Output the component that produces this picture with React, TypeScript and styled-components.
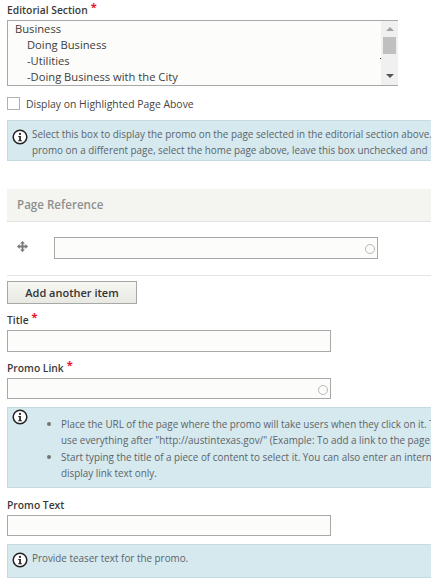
import { createGlobalStyle } from "styled-components";
import styled from "styled-components";

const GlobalStyle = createGlobalStyle`
  html, body {
    margin: 0;
    padding: 0;
    background: #fff;
    overflow: hidden;
    height: 585px;
  }
  body {
    font-family: "Open Sans", "Liberation Sans", sans-serif;
    color: #333;
  }
`;

const Page = styled.div`
  width: 431px;
  height: 585px;
  overflow: hidden;
  padding: 0 0 0 7px;
  box-sizing: border-box;
`;

const Label = styled.div<{ $top: number }>`
  margin-top: ${(p) => p.$top}px;
  height: 14px;
  line-height: 14px;
  font-size: 10.3px;
  font-weight: 600;
  color: #3a3a3a;
  white-space: nowrap;
`;

const Star = styled.span`
  color: #e8132b;
  font-size: 11px;
  font-weight: 700;
  margin-left: 3px;
  position: relative;
  top: -3px;
`;

const ListBox = styled.div`
  margin-top: 3px;
  width: 391px;
  height: 66px;
  box-sizing: border-box;
  border: 1px solid #a8a8a8;
  border-width: 1px 0 1px 1px;
  background: #fcfcfa;
  display: flex;
`;

const ListItems = styled.div`
  flex: 1;
  overflow: hidden;
`;

const ListItem = styled.div<{ $indent: number }>`
  height: 16px;
  line-height: 16px;
  font-size: 11.2px;
  color: #3d3d3d;
  padding-left: ${(p) => p.$indent}px;
  white-space: nowrap;
`;

const Scrollbar = styled.div`
  width: 17px;
  background: #f0f0f0;
  position: relative;
  display: flex;
  flex-direction: column;
  align-items: center;
  justify-content: space-between;
  padding: 6px 0 7px;
  box-sizing: border-box;

  &::before {
    content: "";
    position: absolute;
    left: -1px;
    top: 37px;
    width: 1px;
    height: 1px;
    background: #444;
  }
`;

const ScrollThumb = styled.div`
  position: absolute;
  top: 16px;
  left: 2px;
  width: 13px;
  height: 17px;
  background: #c0c0c0;
`;

const Arrow = styled.div<{ $down?: boolean }>`
  width: 0;
  height: 0;
  border-left: 4px solid transparent;
  border-right: 4px solid transparent;
  ${(p) =>
    p.$down
      ? "border-top: 4px solid #555;"
      : "border-bottom: 4px solid #a3a3a3;"}
`;

const CheckRow = styled.div`
  margin-top: 10px;
  display: flex;
  align-items: center;
  height: 14px;
`;

const CheckBox = styled.div`
  width: 13px;
  height: 13px;
  box-sizing: border-box;
  border: 1px solid #b0b0b0;
  background: #fff;
`;

const CheckLabel = styled.span`
  margin: 2px 0 0 6px;
  font-size: 10.4px;
  color: #444;
  white-space: nowrap;
`;

const Notice = styled.div<{ $top: number; $height: number }>`
  margin-top: ${(p) => p.$top}px;
  width: 460px;
  height: ${(p) => p.$height}px;
  box-sizing: border-box;
  background: #d5e9ef;
  border: 1px solid #c5dbe1;
  display: flex;
  font-size: 9.87px;
  line-height: 16px;
  color: #5d6468;
`;

const NoticeIcon = styled.svg<{ $top: number }>`
  flex: none;
  width: 16px;
  height: 16px;
  margin: ${(p) => p.$top}px 0 0 4px;
`;

const NoticeText = styled.div`
  margin: 5px 0 0 4px;
  white-space: nowrap;
`;

const NoticeList = styled.ul`
  margin: 8px 0 0 33px;
  padding: 0;
  list-style: none;
`;

const NoticeItem = styled.li`
  position: relative;
  white-space: nowrap;

  & + & {
    margin-top: 1px;
  }

  &::before {
    content: "";
    position: absolute;
    left: -14px;
    top: 6px;
    width: 4px;
    height: 4px;
    border-radius: 50%;
    background: #6f7678;
  }
`;

const SectionHead = styled.div`
  margin-top: 28px;
  height: 33px;
  box-sizing: border-box;
  background: #f4f4f0;
  border-bottom: 1px solid #e2e2e0;
  padding-left: 10px;
  line-height: 32px;
  font-size: 11.6px;
  font-weight: 600;
  color: #8f8f8f;
`;

const RefRow = styled.div`
  height: 54px;
  box-sizing: border-box;
  border-bottom: 1px solid #e4e4e4;
  display: flex;
  align-items: flex-start;
  padding: 15px 0 0 10px;
`;

const DragIcon = styled.svg`
  width: 11px;
  height: 11px;
  margin-top: 4px;
  flex: none;
`;

const TextField = styled.div<{ $top?: number; $left?: number; $height?: number }>`
  margin-top: ${(p) => p.$top ?? 0}px;
  margin-left: ${(p) => p.$left ?? 0}px;
  width: 324px;
  height: ${(p) => p.$height ?? 22}px;
  flex: none;
  box-sizing: border-box;
  border: 1px solid #a8a8a8;
  background: #fcfcfa;
  position: relative;
`;

const Throbber = styled.span`
  position: absolute;
  right: 2px;
  top: 6px;
  width: 10px;
  height: 10px;
  box-sizing: border-box;
  border: 1.5px solid #b8b8b8;
  border-radius: 50%;
`;

const AddButton = styled.button`
  display: block;
  margin: 5px 0 0;
  padding: 0;
  width: 130px;
  height: 23px;
  box-sizing: border-box;
  border: 1px solid #a8a8a8;
  border-radius: 0;
  background: linear-gradient(#f7f7f3, #e9e9e3);
  font-family: inherit;
  font-size: 11px;
  font-weight: 600;
  color: #333;
`;

function InfoGlyph({ top }: { top: number }) {
  return (
    <NoticeIcon $top={top} viewBox="0 0 16 16">
      <circle cx="8" cy="8" r="6.8" fill="#fff" stroke="#222" strokeWidth="1.5" />
      <circle cx="8" cy="4.9" r="1.1" fill="#222" />
      <path d="M6.3 7h2.6v4.2h1v1.1H6.2v-1.1h1V8.1h-.9z" fill="#222" />
    </NoticeIcon>
  );
}

export default function App() {
  return (
    <>
      <GlobalStyle />
      <Page>
        <Label $top={3}>
          Editorial Section<Star>*</Star>
        </Label>
        <ListBox>
          <ListItems>
            <ListItem $indent={7}>Business</ListItem>
            <ListItem $indent={19}>Doing Business</ListItem>
            <ListItem $indent={19}>-Utilities</ListItem>
            <ListItem $indent={19}>-Doing Business with the City</ListItem>
          </ListItems>
          <Scrollbar>
            <Arrow />
            <ScrollThumb />
            <Arrow $down />
          </Scrollbar>
        </ListBox>
        <CheckRow>
          <CheckBox />
          <CheckLabel>Display on Highlighted Page Above</CheckLabel>
        </CheckRow>
        <Notice $top={10} $height={41}>
          <InfoGlyph top={8} />
          <NoticeText>
            Select this box to display the promo on the page selected in the editorial section above. To display the
            <br />
            promo on a different page, select the home page above, leave this box unchecked and
          </NoticeText>
        </Notice>
        <SectionHead>Page Reference</SectionHead>
        <RefRow>
          <DragIcon viewBox="0 0 11 11">
            <path
              d="M5.5 0 8 2.6H6.4v2h2V3L11 5.5 8.4 8V6.4h-2v2H8L5.5 11 3 8.4h1.6v-2h-2V8L0 5.5 2.6 3v1.6h2v-2H3z"
              fill="#777"
            />
          </DragIcon>
          <TextField $left={26}>
            <Throbber />
          </TextField>
        </RefRow>
        <AddButton type="button">Add another item</AddButton>
        <Label $top={9}>
          Title<Star>*</Star>
        </Label>
        <TextField $top={3} />
        <Label $top={9}>
          Promo Link<Star>*</Star>
        </Label>
        <TextField $top={3} $height={21}>
          <Throbber />
        </TextField>
        <Notice $top={8} $height={81}>
          <InfoGlyph top={1} />
          <NoticeList>
            <NoticeItem>
              Place the URL of the page where the promo will take users when they click on it. To link to a page,
              <br />
              use everything after "http://austintexas.gov/" (Example: To add a link to the page
            </NoticeItem>
            <NoticeItem>
              Start typing the title of a piece of content to select it. You can also enter an internal path or
              <br />
              display link text only.
            </NoticeItem>
          </NoticeList>
        </Notice>
        <Label $top={10}>Promo Text</Label>
        <TextField $top={3} $height={21} />
        <Notice $top={8} $height={34}>
          <InfoGlyph top={7} />
          <NoticeText>Provide teaser text for the promo.</NoticeText>
        </Notice>
      </Page>
    </>
  );
}
